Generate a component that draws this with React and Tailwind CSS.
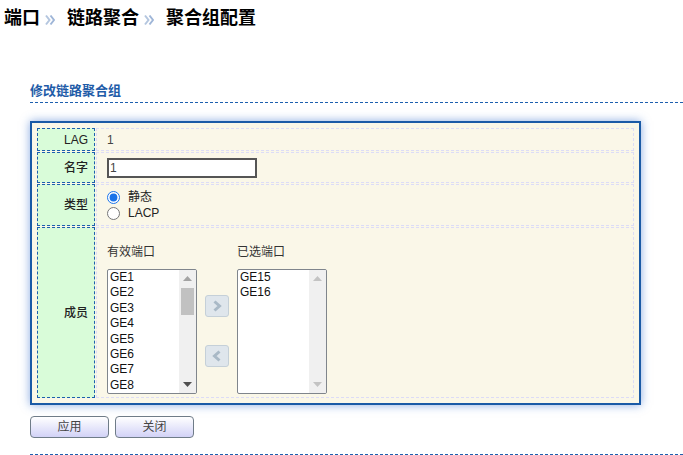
import React from 'react';

const Chevrons = () => (
  <svg width="10" height="12" viewBox="0 0 10 12" className="ml-[5px] mr-[12px] mt-[2px]">
    <path d="M1 1.5 L4.5 6 L1 10.5" fill="none" stroke="#b4c6df" strokeWidth="2" />
    <path d="M5.5 1.5 L9 6 L5.5 10.5" fill="none" stroke="#9fb6d8" strokeWidth="2" />
  </svg>
);

const Row = ({ label, h, children, className = '' }) => (
  <div className={`flex gap-px ${h}`}>
    <div className="w-[58px] shrink-0 border border-dashed border-[#1d5fae] bg-[#d9fcd9] flex items-center justify-end pr-[6px] font-medium text-[12px] text-[#222]">
      {label}
    </div>
    <div className={`flex-1 border border-dashed border-[#dcdcf6] pl-[10px] ${className}`}>{children}</div>
  </div>
);

const ScrollArrow = ({ up, color }) => (
  <svg width="9" height="5" viewBox="0 0 9 5">
    <path d={up ? 'M0 5 L4.5 0 L9 5 Z' : 'M0 0 L4.5 5 L9 0 Z'} fill={color} />
  </svg>
);

const ListBox = ({ items, scroll }) => (
  <div className="w-[90px] h-[125px] border border-[#7f858c] rounded-[2px] bg-white flex overflow-hidden">
    <div className="flex-1 overflow-hidden pl-[2px] text-[12px] leading-[15.4px] text-[#111]">
      {items.map((it) => (
        <div key={it}>{it}</div>
      ))}
    </div>
    <div className="w-[17px] bg-[#f0f0f0] flex flex-col items-center">
      <div className="h-[17px] flex items-center justify-center">
        <ScrollArrow up color={scroll ? '#a3a3a3' : '#c3c3c3'} />
      </div>
      <div className="flex-1 w-full px-[2px]">
        {scroll && <div className="h-[27px] mt-[1px] bg-[#c1c1c1]" />}
      </div>
      <div className="h-[17px] flex items-center justify-center">
        <ScrollArrow color={scroll ? '#505050' : '#c3c3c3'} />
      </div>
    </div>
  </div>
);

const MoveButton = ({ dir }) => (
  <div className="w-[24px] h-[22px] rounded-[3px] border border-[#c5d0d8] bg-[#dfe6ec] flex items-center justify-center">
    <svg width="10" height="12" viewBox="0 0 10 12">
      <path
        d={dir === 'right' ? 'M2.5 1.5 L7.5 6 L2.5 10.5' : 'M7.5 1.5 L2.5 6 L7.5 10.5'}
        fill="none"
        stroke="#a9b9c6"
        strokeWidth="3"
      />
    </svg>
  </div>
);

const Btn = ({ children }) => (
  <button className="w-[79px] h-[22px] rounded-[4px] border border-[#6f7c88] bg-gradient-to-b from-white to-[#d2d2f6] text-[12px] text-[#444]">
    {children}
  </button>
);

export default function App() {
  const avail = Array.from({ length: 8 }, (_, i) => `GE${i + 1}`);
  return (
    <div className="w-[683px] h-[455px] overflow-hidden bg-white font-['Liberation_Sans','Noto_Sans_CJK_SC',sans-serif] text-[#222]">
      <div className="h-[37px] flex items-center pl-[4px] text-[18px] font-bold text-black">
        <span>端口</span>
        <Chevrons />
        <span>链路聚合</span>
        <Chevrons />
        <span>聚合组配置</span>
      </div>

      <div className="pl-[30px]">
        <div className="mt-[44px] h-[22px] border-b border-dashed border-[#1d5fae] text-[13px] font-bold leading-[20px] text-[#1f5ca8]">
          修改链路聚合组
        </div>

        <div className="mt-[18px] w-[611px] h-[284px] border-2 border-[#1a5aa6] bg-[#faf7e8] p-[5px] shadow-[0_0_9px_rgba(40,100,200,0.55)] flex flex-col gap-px">
          <Row label="LAG" h="h-[23px]" className="flex items-center text-[12px] text-[#444]">
            1
          </Row>
          <Row label="名字" h="h-[31px]" className="flex items-center">
            <input
              defaultValue="1"
              className="w-[150px] h-[20px] border-2 border-[#555] bg-white px-[1px] text-[12px] text-[#444] outline-none"
            />
          </Row>
          <Row label="类型" h="h-[42px]" className="flex flex-col justify-center gap-[3px] text-[12px] text-[#222]">
            <label className="flex items-center gap-[8px] h-[13px] leading-[13px]">
              <input type="radio" name="t" defaultChecked className="m-0 w-[13px] h-[13px] accent-[#1a73e8]" />
              静态
            </label>
            <label className="flex items-center gap-[8px] h-[13px] leading-[13px]">
              <input type="radio" name="t" className="m-0 w-[13px] h-[13px]" />
              LACP
            </label>
          </Row>
          <Row label="成员" h="h-[171px]" className="pt-[17px]">
            <div className="flex text-[12px] text-[#333]">
              <div className="flex flex-col">
                <div className="leading-[14px] h-[24px]">有效端口</div>
                <ListBox items={avail} scroll />
              </div>
              <div className="w-[40px] flex flex-col items-center pt-[50px] gap-[28px]">
                <MoveButton dir="right" />
                <MoveButton dir="left" />
              </div>
              <div className="flex flex-col">
                <div className="leading-[14px] h-[24px]">已选端口</div>
                <ListBox items={['GE15', 'GE16']} />
              </div>
            </div>
          </Row>
        </div>

        <div className="mt-[11px] flex gap-[6px]">
          <Btn>应用</Btn>
          <Btn>关闭</Btn>
        </div>

        <div className="mt-[16px] border-t border-dashed border-[#1d5fae]" />
      </div>
    </div>
  );
}
